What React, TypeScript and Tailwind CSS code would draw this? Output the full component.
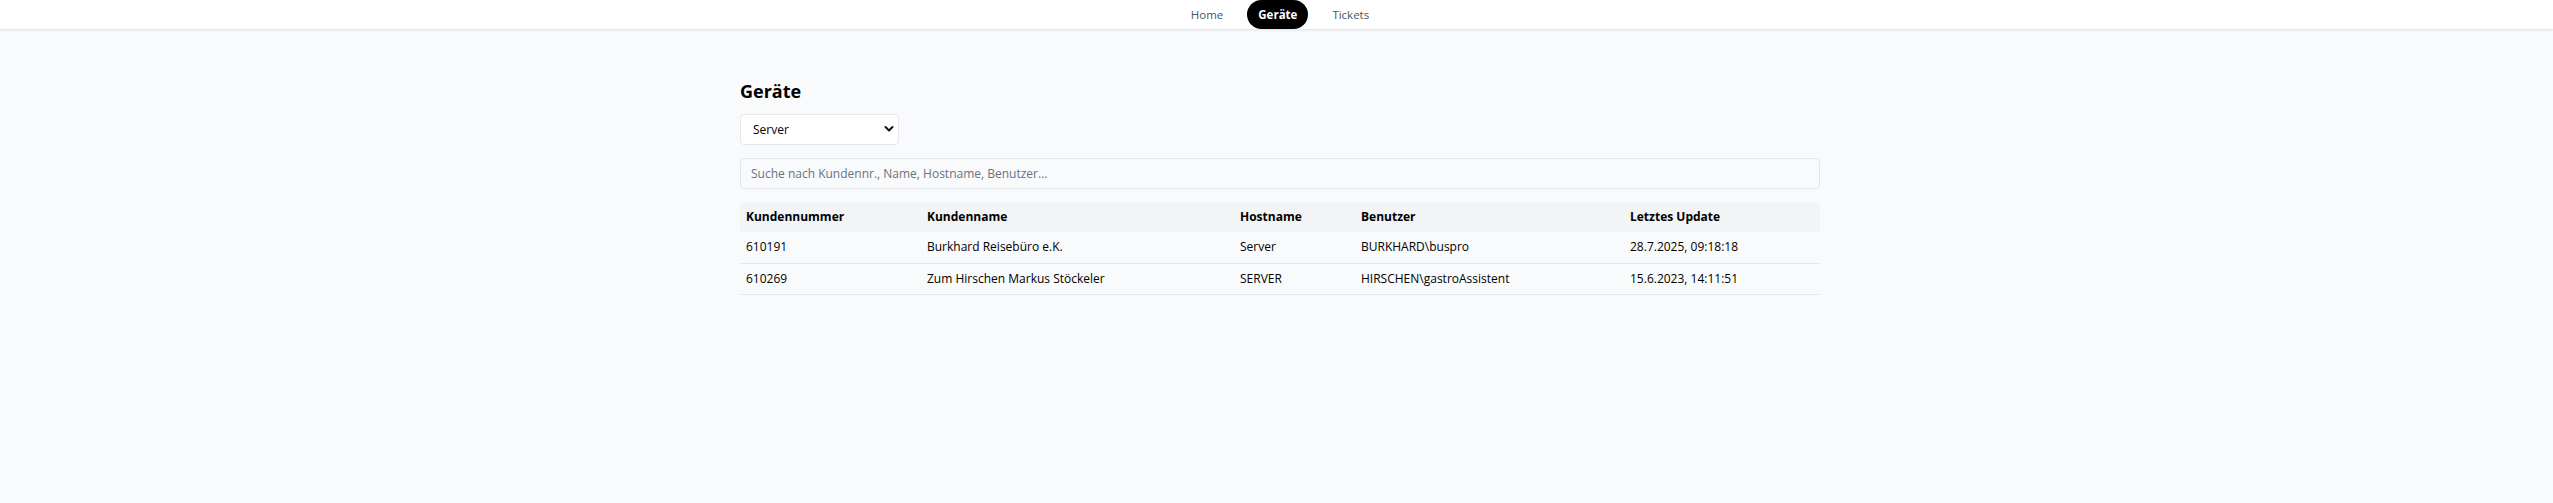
import React from "react";

const rows = [
  { nr: "610191", name: "Burkhard Reisebüro e.K.", host: "Server", user: "BURKHARD\\buspro", upd: "28.7.2025, 09:18:18" },
  { nr: "610269", name: "Zum Hirschen Markus Stöckeler", host: "SERVER", user: "HIRSCHEN\\gastroAssistent", upd: "15.6.2023, 14:11:51" },
];

export default function App() {
  return (
    <div
      className="min-h-[503px] bg-[#f9fafb] text-[#111827]"
      style={{ fontFamily: '"Open Sans", "Noto Sans", Arial, sans-serif' }}
    >
      <nav className="h-[30px] bg-white border-b border-[#e5e7eb] shadow-[0_1px_2px_rgba(0,0,0,0.05)] pl-[7px] flex items-center justify-center gap-3">
        <a className="h-[28px] px-3 flex items-center text-[11.5px] font-medium text-[#4b5563]">Home</a>
        <a className="h-[29px] px-[11px] flex items-center rounded-full bg-black text-[11.5px] font-bold text-white">Geräte</a>
        <a className="h-[28px] px-3 flex items-center text-[11.5px] font-medium text-[#4b5563]">Tickets</a>
      </nav>
      <main className="pl-[7px]">
        <div className="mx-auto w-[1080px] pt-[47px]">
          <h1 className="text-[18px] leading-[28px] font-bold text-black mb-[9px]">Geräte</h1>
          <div className="relative w-[159px] h-[31px] mb-[13px]">
            <select
              defaultValue="Server"
              className="appearance-none w-full h-full rounded-[4px] border border-[#e5e7eb] bg-white pl-[12px] pr-8 text-[12px] text-black outline-none"
            >
              <option>Server</option>
              <option>Client</option>
            </select>
            <svg
              className="pointer-events-none absolute right-[5px] top-[11px]"
              width="10"
              height="8"
              viewBox="0 0 10 8"
              fill="none"
            >
              <path d="M1.5 2 L5 5.5 L8.5 2" stroke="#111" strokeWidth="2" strokeLinecap="round" strokeLinejoin="round" />
            </svg>
          </div>
          <input
            placeholder="Suche nach Kundennr., Name, Hostname, Benutzer..."
            className="block w-full h-[31px] rounded-[4px] border border-[#e5e7eb] bg-[#f9fafb] px-[10px] text-[12px] placeholder:text-[#6b7280] outline-none mb-[13px]"
          />
          <table className="w-full table-fixed border-collapse text-[12px]">
            <thead>
              <tr className="bg-[#f3f4f6] h-[30px]">
                <th className="w-[181px] text-left font-bold px-[6px] text-black">Kundennummer</th>
                <th className="w-[313px] text-left font-bold px-[6px] text-black">Kundenname</th>
                <th className="w-[121px] text-left font-bold px-[6px] text-black">Hostname</th>
                <th className="w-[269px] text-left font-bold px-[6px] text-black">Benutzer</th>
                <th className="w-[196px] text-left font-bold px-[6px] text-black">Letztes Update</th>
              </tr>
            </thead>
            <tbody>
              {rows.map((r) => (
                <tr key={r.nr} className="h-[31px] border-b border-[#e5e7eb]">
                  <td className="px-[6px] text-black">{r.nr}</td>
                  <td className="px-[6px] text-black">{r.name}</td>
                  <td className="px-[6px] text-black">{r.host}</td>
                  <td className="px-[6px] text-black">{r.user}</td>
                  <td className="px-[6px] text-black">{r.upd}</td>
                </tr>
              ))}
            </tbody>
          </table>
        </div>
      </main>
    </div>
  );
}
